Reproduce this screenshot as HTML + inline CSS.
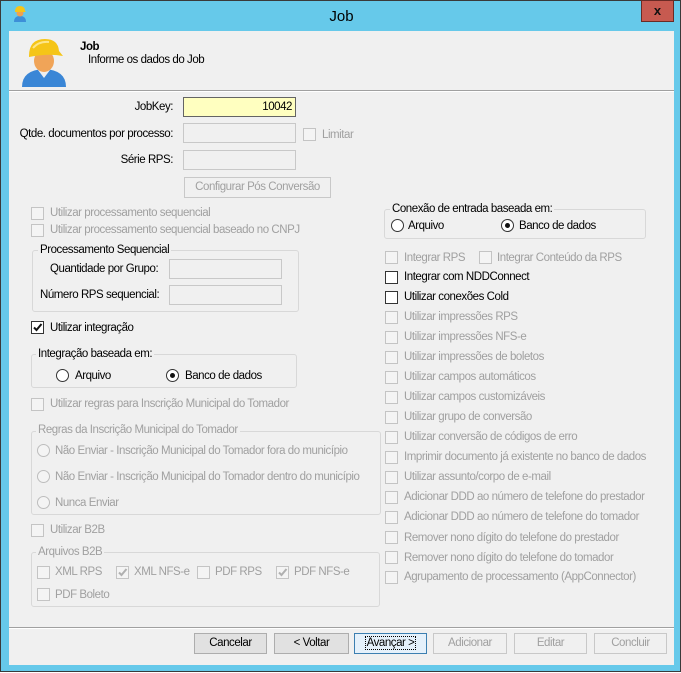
<!DOCTYPE html><html><head><meta charset="utf-8"><style>
*{box-sizing:border-box;margin:0;padding:0}
body{width:681px;height:673px;background:#fff;position:relative;overflow:hidden;font-family:"Liberation Sans",Arial,sans-serif;font-size:11.5px;letter-spacing:-0.45px;color:#000}
.a{position:absolute;white-space:nowrap}
.win{position:absolute;left:0;top:0;width:681px;height:672px;background:#66c9ea;border:1px solid #3a3a3a}
.cl{position:absolute;left:8px;top:30px;width:665px;height:634px;background:#f0f0f0}
.t{line-height:14px}
.d{color:#a0a0a0}
.cb{position:absolute;width:13px;height:13px;border:1px solid #333;background:#fff}
.cb.d{border-color:#c4c4c4;background:#f4f4f4}
.rb{position:absolute;width:13px;height:13px;border:1px solid #333;border-radius:50%;background:#fff}
.rb.d{border-color:#bdbdbd;background:#f4f4f4}
.rb.on::after{content:"";position:absolute;left:3px;top:3px;width:5px;height:5px;border-radius:50%;background:#111}
.in{position:absolute;border:1px solid #c8c8c8;background:#f0f0f0;height:20px}
.gb{position:absolute;border:1px solid #d8d8d8;border-radius:3px}
.gt{position:absolute;background:#f0f0f0;padding:0 2px;line-height:14px}
.bt{position:absolute;top:632px;height:21px;border:1px solid #adadad;background:#e1e1e1;text-align:center;line-height:19px}
.bt.d{border-color:#c8c8c8;background:#f0f0f0;color:#a0a0a0}
</style></head><body>
<div class="win">
<svg class="a" style="left:11px;top:4px" width="16" height="18" viewBox="0 0 16 18"><path d="M2 17 Q2 11 8 11 Q14 11 14 17Z" fill="#3d8fd8"/><circle cx="8" cy="8" r="3.5" fill="#f0a050"/><path d="M3 7 Q3 1 8 1 Q13 1 13 6 L14 7 Z" fill="#f5c518"/></svg>
<div class="a" style="left:0;width:681px;top:7px;text-align:center;font-size:15px;letter-spacing:0">Job</div>
<div class="a" style="left:640px;top:-1px;width:33px;height:22px;background:#c75a50;border:1px solid #6a2a25;color:#111;font-weight:bold;text-align:center;line-height:20px;font-size:13px;letter-spacing:0">x</div>
<div class="cl">
<svg class="a" style="left:10px;top:5px" width="50" height="52" viewBox="0 0 50 52"><path d="M3 51 Q3 34 25 33 Q47 34 47 51Z" fill="#3a86d6"/><path d="M19 34 L25 42 L31 34Z" fill="#eee"/><ellipse cx="25" cy="25" rx="10" ry="11" fill="#f0a458"/><path d="M10 20 Q10 3 26 3 Q39 3 40 15 L44 20 Q30 17 10 21Z" fill="#f5c518"/><path d="M14 12 Q20 5 30 6" stroke="#fde68a" stroke-width="2" fill="none"/></svg>
<div class="a t" style="left:71px;top:9px;font-weight:bold">Job</div>
<div class="a t" style="left:79px;top:22px">Informe os dados do Job</div>
<div class="a" style="left:0;top:59px;width:665px;height:1px;background:#a0a0a0"></div>
<div class="a" style="left:0;top:60px;width:665px;height:1px;background:#fff"></div>

<div class="a t" style="left:0;width:164px;text-align:right;top:69px">JobKey:</div>
<div class="in" style="left:174px;top:66px;width:113px;background:#ffffc0;border-color:#646464;text-align:right;padding:2px 3px;line-height:14px">10042</div>
<div class="a t" style="left:0;width:164px;text-align:right;top:96px">Qtde. documentos por processo:</div>
<div class="in" style="left:174px;top:92px;width:113px"></div>
<div class="cb d" style="left:294px;top:97px"></div><div class="a t d" style="left:313px;top:97px">Limitar</div>
<div class="a t" style="left:0;width:164px;text-align:right;top:122px">Série RPS:</div>
<div class="in" style="left:174px;top:119px;width:113px"></div>
<div class="bt d" style="left:175px;top:146px;width:147px;height:21px">Configurar Pós Conversão</div>

<div class="cb d" style="left:22px;top:176px"></div><div class="a t d" style="left:41px;top:175px">Utilizar processamento sequencial</div>
<div class="cb d" style="left:22px;top:193px"></div><div class="a t d" style="left:41px;top:192px">Utilizar processamento sequencial baseado no CNPJ</div>
<div class="gb" style="left:23px;top:219px;width:267px;height:62px"></div><div class="gt" style="left:29px;top:212px">Processamento Sequencial</div>
<div class="a t" style="left:41px;top:231px">Quantidade por Grupo:</div><div class="in" style="left:160px;top:228px;width:113px"></div>
<div class="a t" style="left:31px;top:257px">Número RPS sequencial:</div><div class="in" style="left:160px;top:254px;width:113px"></div>
<div class="cb" style="left:22px;top:290px"><svg width="11" height="11" style="position:absolute;left:0;top:0"><path d="M2 5.5 L4.5 8 L9.5 2" stroke="#111" stroke-width="2" fill="none"/></svg></div><div class="a t" style="left:41px;top:290px">Utilizar integração</div>
<div class="gb" style="left:22px;top:323px;width:266px;height:34px"></div><div class="gt" style="left:27px;top:316px">Integração baseada em:</div>
<div class="rb" style="left:47px;top:338px"></div><div class="a t" style="left:66px;top:338px">Arquivo</div>
<div class="rb on" style="left:157px;top:338px"></div><div class="a t" style="left:176px;top:338px">Banco de dados</div>
<div class="cb d" style="left:22px;top:367px"></div><div class="a t d" style="left:41px;top:366px">Utilizar regras para Inscrição Municipal do Tomador</div>
<div class="gb" style="left:22px;top:400px;width:350px;height:84px"></div><div class="gt d" style="left:27px;top:392px">Regras da Inscrição Municipal do Tomador</div>
<div class="rb d" style="left:28px;top:413px"></div><div class="a t d" style="left:46px;top:413px">Não Enviar - Inscrição Municipal do Tomador fora do município</div>
<div class="rb d" style="left:28px;top:439px"></div><div class="a t d" style="left:46px;top:439px">Não Enviar - Inscrição Municipal do Tomador dentro do município</div>
<div class="rb d" style="left:28px;top:465px"></div><div class="a t d" style="left:46px;top:465px">Nunca Enviar</div>
<div class="cb d" style="left:22px;top:493px"></div><div class="a t d" style="left:41px;top:492px">Utilizar B2B</div>
<div class="gb" style="left:22px;top:521px;width:349px;height:55px"></div><div class="gt d" style="left:27px;top:514px">Arquivos B2B</div>
<div class="cb d" style="left:28px;top:535px"></div><div class="a t d" style="left:46px;top:534px">XML RPS</div>
<div class="cb d" style="left:107px;top:535px"><svg width="11" height="11" style="position:absolute;left:0;top:0"><path d="M2 5.5 L4.5 8 L9.5 2" stroke="#b0b0b0" stroke-width="2" fill="none"/></svg></div><div class="a t d" style="left:125px;top:534px">XML NFS-e</div>
<div class="cb d" style="left:188px;top:535px"></div><div class="a t d" style="left:206px;top:534px">PDF RPS</div>
<div class="cb d" style="left:267px;top:535px"><svg width="11" height="11" style="position:absolute;left:0;top:0"><path d="M2 5.5 L4.5 8 L9.5 2" stroke="#b0b0b0" stroke-width="2" fill="none"/></svg></div><div class="a t d" style="left:285px;top:534px">PDF NFS-e</div>
<div class="cb d" style="left:28px;top:557px"></div><div class="a t d" style="left:46px;top:557px">PDF Boleto</div>

<div class="gb" style="left:375px;top:178px;width:262px;height:30px"></div><div class="gt" style="left:381px;top:171px">Conexão de entrada baseada em:</div>
<div class="rb" style="left:382px;top:188px"></div><div class="a t" style="left:399px;top:188px">Arquivo</div>
<div class="rb on" style="left:492px;top:188px"></div><div class="a t" style="left:510px;top:188px">Banco de dados</div>

<div class="cb d" style="left:376px;top:220px"></div><div class="a t d" style="left:395px;top:220px">Integrar RPS</div>
<div class="cb d" style="left:470px;top:220px"></div><div class="a t d" style="left:488px;top:220px">Integrar Conteúdo da RPS</div>
<div class="cb" style="left:376px;top:240px"></div><div class="a t" style="left:395px;top:239px">Integrar com NDDConnect</div>
<div class="cb" style="left:376px;top:260px"></div><div class="a t" style="left:395px;top:259px">Utilizar conexões Cold</div>
<div class="cb d" style="left:376px;top:280px"></div><div class="a t d" style="left:395px;top:279px">Utilizar impressões RPS</div>
<div class="cb d" style="left:376px;top:300px"></div><div class="a t d" style="left:395px;top:299px">Utilizar impressões NFS-e</div>
<div class="cb d" style="left:376px;top:320px"></div><div class="a t d" style="left:395px;top:319px">Utilizar impressões de boletos</div>
<div class="cb d" style="left:376px;top:340px"></div><div class="a t d" style="left:395px;top:339px">Utilizar campos automáticos</div>
<div class="cb d" style="left:376px;top:360px"></div><div class="a t d" style="left:395px;top:359px">Utilizar campos customizáveis</div>
<div class="cb d" style="left:376px;top:380px"></div><div class="a t d" style="left:395px;top:379px">Utilizar grupo de conversão</div>
<div class="cb d" style="left:376px;top:400px"></div><div class="a t d" style="left:395px;top:399px">Utilizar conversão de códigos de erro</div>
<div class="cb d" style="left:376px;top:420px"></div><div class="a t d" style="left:395px;top:419px">Imprimir documento já existente no banco de dados</div>
<div class="cb d" style="left:376px;top:440px"></div><div class="a t d" style="left:395px;top:439px">Utilizar assunto/corpo de e-mail</div>
<div class="cb d" style="left:376px;top:460px"></div><div class="a t d" style="left:395px;top:459px">Adicionar DDD ao número de telefone do prestador</div>
<div class="cb d" style="left:376px;top:480px"></div><div class="a t d" style="left:395px;top:479px">Adicionar DDD ao número de telefone do tomador</div>
<div class="cb d" style="left:376px;top:500px"></div><div class="a t d" style="left:395px;top:500px">Remover nono dígito do telefone do prestador</div>
<div class="cb d" style="left:376px;top:520px"></div><div class="a t d" style="left:395px;top:520px">Remover nono dígito do telefone do tomador</div>
<div class="cb d" style="left:376px;top:540px"></div><div class="a t d" style="left:395px;top:539px">Agrupamento de processamento (AppConnector)</div>

<div class="a" style="left:0;top:596px;width:665px;height:1px;background:#a0a0a0"></div>
<div class="a" style="left:0;top:597px;width:665px;height:1px;background:#fff"></div>
</div>
<div class="bt" style="left:193px;width:73px">Cancelar</div>
<div class="bt" style="left:273px;width:75px">&lt; Voltar</div>
<div class="bt" style="left:353px;width:73px;border-color:#3c7fb1;background:#e5f1fb"><span style="outline:1px dotted #000;padding:0 1px">Avançar &gt;</span></div>
<div class="bt d" style="left:432px;width:74px">Adicionar</div>
<div class="bt d" style="left:513px;width:73px">Editar</div>
<div class="bt d" style="left:593px;width:73px">Concluir</div>
</div>
</body></html>
